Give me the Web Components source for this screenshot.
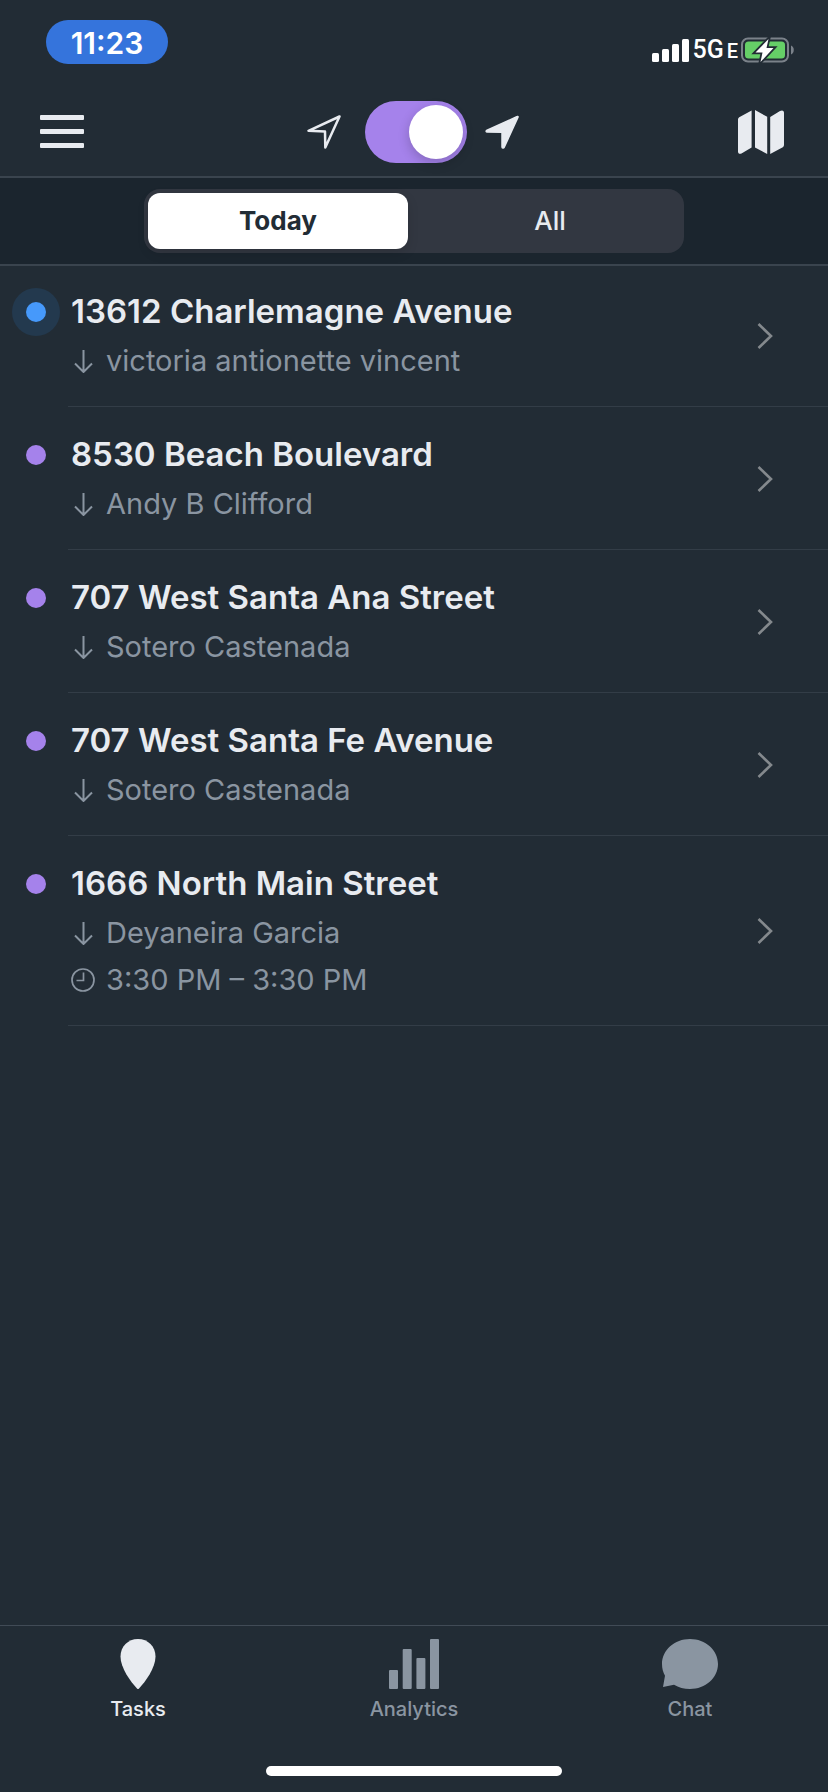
<!DOCTYPE html>
<html lang="en">
<head>
<meta charset="utf-8">
<meta name="viewport" content="width=device-width, initial-scale=1">
<title>Tasks</title>
<style>
  body {
    margin: 0;
    background: #222c35;
    color: #e8ebf0;
    font-family: Inter, "Liberation Sans", sans-serif;
    --page: #222c35;
    --bar: #1b252e;
    --line: #3a444e;
    --row-line: #333d47;
    --text: #e8ebf0;
    --muted: #8a95a1;
    --purple: #a582eb;
  }
</style>
</head>
<body>
<app-screen>
  <status-bar slot="top" time="11:23"></status-bar>
  <nav-bar slot="top"></nav-bar>
  <segment-bar slot="top"></segment-bar>
  <task-row kind="current" person="victoria antionette vincent">13612 Charlemagne Avenue</task-row>
  <task-row person="Andy B Clifford">8530 Beach Boulevard</task-row>
  <task-row person="Sotero Castenada">707 West Santa Ana Street</task-row>
  <task-row person="Sotero Castenada">707 West Santa Fe Avenue</task-row>
  <task-row person="Deyaneira Garcia" window="3:30 PM – 3:30 PM">1666 North Main Street</task-row>
  <tab-bar slot="bottom">
    <tab-item current>
      <svg slot="icon" width="36" height="50" viewBox="0 0 36 50" fill="currentColor"><path d="M18 0C28 0 35.500 7.500 35.500 17.500C35.500 29 25.500 42.500 19 49.500Q18 50.500 17 49.500C10.500 42.500 .5 29 .5 17.500C.5 7.500 8 0 18 0Z"/></svg>
      Tasks
    </tab-item>
    <tab-item>
      <svg slot="icon" width="50" height="50" viewBox="0 0 50 50" fill="currentColor"><rect y="31" width="9" height="19" rx="1"/><rect x="13.700" y="10" width="9" height="40" rx="1"/><rect x="27.400" y="19" width="9" height="31" rx="1"/><rect x="41" width="9" height="50" rx="1"/></svg>
      Analytics
    </tab-item>
    <tab-item>
      <svg slot="icon" width="56" height="50" viewBox="0 0 56 50" fill="currentColor"><path d="M28 0C43.500 0 56 11 56 25S43.500 50 28 50C22 50 16.500 48.500 12 45.700L1 48L3 36.700C1 33.300 0 29.500 0 25C0 11 12.500 0 28 0Z"/></svg>
      Chat
    </tab-item>
  </tab-bar>
</app-screen>

<script>
  class BaseElement extends HTMLElement {
    render(html) {
      this.attachShadow({ mode: "open" }).innerHTML = html;
    }
  }

  customElements.define("app-screen", class extends BaseElement {
    connectedCallback() {
      this.render(`
        <style>
          :host { display: flex; flex-direction: column; min-height: 100vh; background: var(--page); }
          main { flex: 1; }
        </style>
        <header><slot name="top"></slot></header>
        <main><slot></slot></main>
        <slot name="bottom"></slot>`);
    }
  });

  customElements.define("status-bar", class extends BaseElement {
    connectedCallback() {
      this.render(`
        <style>
          :host { display: flex; justify-content: space-between; align-items: flex-start; height: 68px; padding: 20px 34px 0 46px; }
          .time { width: 122px; padding-top: 2px; border-radius: 22px; background: #3574dc; color: #fff; text-align: center; font-size: 30px; line-height: 42px; font-weight: 600; }
          .right { display: flex; align-items: center; gap: 3px; height: 60px; color: #fff; }
          .net { display: flex; align-items: baseline; gap: 3px; font: 500 25px/30px Roboto, sans-serif; }
          .net small { font-size: 20px; }
          svg { display: block; }
        </style>
        <span class="time">${this.getAttribute("time")}</span>
        <div class="right">
          <svg width="37" height="23" viewBox="0 0 37 23" fill="#fff"><rect y="14" width="7" height="9" rx="1.500"/><rect x="10" y="10" width="7" height="13" rx="1.500"/><rect x="20" y="5" width="7" height="18" rx="1.500"/><rect x="30" width="7" height="23" rx="1.500"/></svg>
          <span class="net"><span>5G</span><small>E</small></span>
          <svg width="53" height="26" viewBox="0 0 53 26">
            <rect x="1" y="1.500" width="46" height="23" rx="6" fill="none" stroke="#7b828a" stroke-width="2"/>
            <path d="M50 8.500V17.500C53.700 16.500 53.700 9.500 50 8.500Z" fill="#7b828a"/>
            <rect x="4" y="4.500" width="40" height="17" rx="3.500" fill="#65cf67"/>
            <path d="M27.500 2L14.500 15.500H21.500L19.500 25L32.500 11H25.500Z" fill="#fff" stroke="#222c35" stroke-width="3.600" paint-order="stroke" stroke-linejoin="miter"/>
          </svg>
        </div>`);
    }
  });

  customElements.define("nav-bar", class extends BaseElement {
    connectedCallback() {
      const arrow = "M32.300 1.500L1.500 15.500C.9 15.900 1 16.800 1.800 16.900L17 17.300V32C17 33.200 18.600 33.500 19.100 32.500L33 2.200C33.200 1.600 32.900 1.200 32.300 1.500Z";
      this.render(`
        <style>
          :host { display: grid; grid-template-columns: 1fr auto 1fr; align-items: center; height: 88px; padding: 0 42px 0 40px; border-bottom: 2px solid var(--line); color: var(--text); }
          button { display: block; padding: 0; border: 0; background: none; color: inherit; }
          button:last-child { justify-self: end; }
          svg { display: block; }
          .mode { display: flex; align-items: center; gap: 18px; }
          .mode svg:first-child { margin-right: 6px; }
          input { appearance: none; display: flex; justify-content: flex-end; box-sizing: border-box; width: 102px; height: 62px; margin: 0; padding: 4px; border-radius: 31px; background: var(--purple); }
          input::before { content: ""; width: 54px; height: 54px; border-radius: 50%; background: #fff; box-shadow: 0 4px 12px rgba(0, 0, 0, .2); }
          input:not(:checked) { justify-content: flex-start; background: #3a444f; }
        </style>
        <button aria-label="Menu">
          <svg width="44" height="34" viewBox="0 0 44 34" fill="currentColor"><rect width="44" height="5" rx="1"/><rect y="14" width="44" height="5" rx="1"/><rect y="28" width="44" height="5" rx="1"/></svg>
        </button>
        <div class="mode">
          <svg width="34" height="34" viewBox="0 0 34 34" fill="none" stroke="currentColor" stroke-width="2.500" stroke-linejoin="round"><path d="M32.500 1.500L1.500 15.800L18 16.400L18.300 32.500Z"/></svg>
          <input type="checkbox" role="switch" aria-label="On duty" checked>
          <svg width="34" height="34" viewBox="0 0 34 34" fill="currentColor" stroke="currentColor" stroke-width="1.500" stroke-linejoin="round"><path d="${arrow}"/></svg>
        </div>
        <button aria-label="Map">
          <svg width="48" height="44" viewBox="0 0 48 44" fill="currentColor"><path d="M13.600 .4V37.500L3.500 43.500C1.500 44.400 0 43.500 0 41.500V9.500Q0 8 1.200 7.300ZM17 0L29.200 6.800V44L17 37.500ZM32.200 7L42 1C44.500-.2 46 .8 46 2.800V35Q46 36.500 44.800 37.300L32.200 44Z"/></svg>
        </button>`);
    }
  });

  customElements.define("segment-bar", class extends BaseElement {
    connectedCallback() {
      this.render(`
        <style>
          :host { display: block; position: relative; padding: 11px 0; background: var(--bar); box-shadow: 0 2px var(--line); }
          fieldset { display: grid; grid-template-columns: 1fr 1fr; gap: 12px; box-sizing: border-box; width: min(540px, 100% - 48px); margin: 0 auto; padding: 4px; border: 0; border-radius: 16px; background: #323741; }
          label { display: block; border-radius: 12px; text-align: center; font-size: 26px; line-height: 56px; font-weight: 500; }
          label:has(input:checked) { background: #fff; color: var(--page); font-weight: 700; box-shadow: 0 4px 12px rgba(0, 0, 0, .12); }
          input { appearance: none; position: absolute; margin: 0; }
        </style>
        <fieldset aria-label="Period">
          <label><input type="radio" name="period" checked>Today</label>
          <label><input type="radio" name="period">All</label>
        </fieldset>`);
    }
  });

  customElements.define("task-row", class extends BaseElement {
    connectedCallback() {
      const time = this.getAttribute("window");
      this.render(`
        <style>
          :host { display: block; }
          a { display: flex; padding-left: 12px; color: inherit; text-decoration: none; }
          .mark { display: grid; place-items: center; flex: none; width: 48px; height: 48px; margin: 24px 8px 0 0; border-radius: 50%; }
          .mark::before { content: ""; width: 20px; height: 20px; border-radius: 50%; background: var(--purple); }
          :host([kind="current"]) .mark { background: #23394e; }
          :host([kind="current"]) .mark::before { background: #4699fb; }
          .body { display: flex; flex: 1; align-items: center; justify-content: space-between; padding: 23px 55px 22px 3px; border-bottom: 1px solid var(--row-line); }
          h2 { margin: 0 0 2px; font-size: 33px; line-height: 48px; font-weight: 600; }
          p { display: flex; align-items: center; gap: 11px; margin: 0; color: var(--muted); font-size: 29px; line-height: 47px; }
          svg { display: block; flex: none; fill: none; stroke: currentColor; }
          .chevron { color: #84898d; }
        </style>
        <a href="#task">
          <span class="mark"></span>
          <div class="body">
            <div>
              <h2><slot></slot></h2>
              <p><svg width="24" height="24" viewBox="0 0 24 24" stroke-width="2"><path d="M12.500 1V23M4 14.500L12.500 23L21 14.500"/></svg><span>${this.getAttribute("person")}</span></p>
              ${time ? `<p><svg width="24" height="24" viewBox="0 0 24 24" stroke-width="1.700"><circle cx="12" cy="12" r="11"/><path d="M12.500 4.500V12.500H5.500"/></svg><span>${time}</span></p>` : ""}
            </div>
            <svg class="chevron" width="16" height="26" viewBox="0 0 16 26" stroke-width="2.600"><path d="M1.500 1L14 13L1.500 25"/></svg>
          </div>
        </a>`);
    }
  });

  customElements.define("tab-bar", class extends BaseElement {
    connectedCallback() {
      this.render(`
        <style>
          :host { display: block; border-top: 1px solid #414b56; padding: 13px 0 16px; }
          nav { display: grid; grid-template-columns: repeat(3, 1fr); }
          .home { width: 296px; height: 10px; margin: 43px auto 0; border-radius: 5px; background: #fff; }
        </style>
        <nav><slot></slot></nav>
        <div class="home"></div>`);
    }
  });

  customElements.define("tab-item", class extends BaseElement {
    connectedCallback() {
      this.render(`
        <style>
          :host { display: block; color: var(--muted); }
          :host([current]) { color: var(--text); }
          a { display: flex; flex-direction: column; align-items: center; gap: 6px; color: inherit; text-decoration: none; font-size: 20px; line-height: 28px; font-weight: 500; }
          ::slotted(svg) { display: block; }
        </style>
        <a href="#tab"><slot name="icon"></slot><span><slot></slot></span></a>`);
    }
  });
</script>
</body>
</html>
